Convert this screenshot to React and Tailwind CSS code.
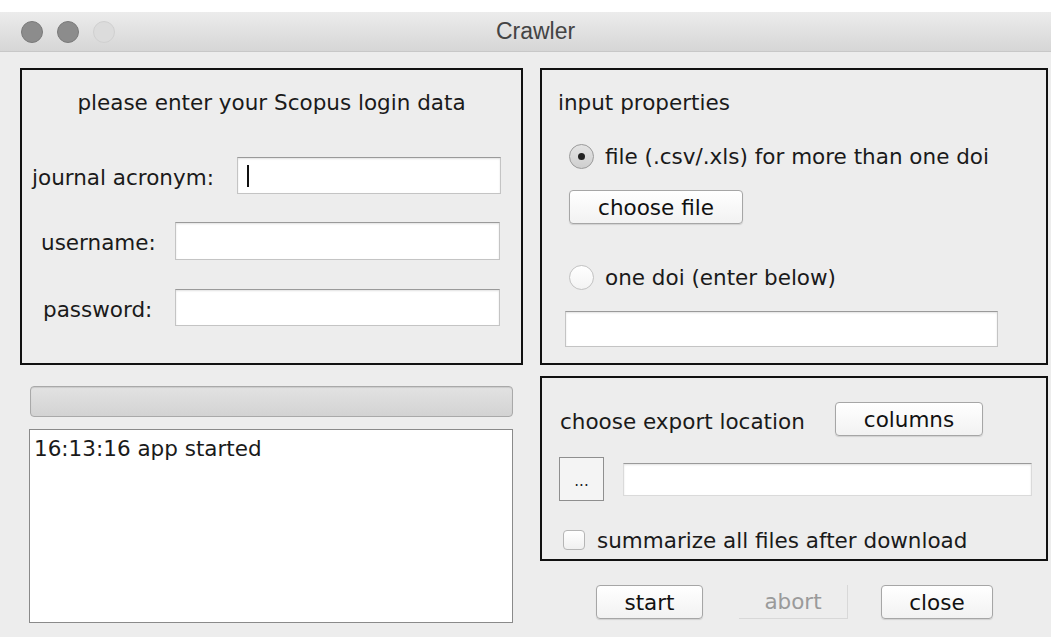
import React from 'react'

const ui = { fontFamily: '"DejaVu Sans", "Liberation Sans", sans-serif' }

function Field({ className = '', children }) {
    return (
        <div className={`bg-white border border-[#c4c4c4] border-t-[#9a9a9a] shadow-[inset_0_1px_2px_rgba(0,0,0,0.12)] flex items-center ${className}`}>
            {children}
        </div>
    )
}

function Button({ className = '', children }) {
    return (
        <div className={`flex items-center justify-center pt-[2px] rounded-[4px] border border-[#a6a6a6] bg-gradient-to-b from-white to-[#f2f2f2] shadow-[0_1px_1px_rgba(0,0,0,0.12)] text-[#111] ${className}`}>
            {children}
        </div>
    )
}

function Radio({ checked }) {
    return (
        <div className={`w-[25px] h-[25px] rounded-full border flex items-center justify-center shrink-0 ${checked ? 'border-[#9a9a9a] bg-gradient-to-b from-[#e4e4e4] to-[#cfcfcf]' : 'border-[#c2c2c2] bg-gradient-to-b from-white to-[#f3f3f3]'}`}>
            {checked && <div className="w-[7px] h-[7px] rounded-full bg-[#222]" />}
        </div>
    )
}

export default function App() {
    return (
        <div className="w-[1051px] h-[637px] bg-white overflow-hidden text-[21.5px] text-[#1a1a1a]" style={ui}>
            <div className="h-[12px] bg-white" />
            {/* title bar */}
            <div className="h-[40px] bg-gradient-to-b from-[#ececec] to-[#d6d6d6] border-b border-[#c8c8c8] flex items-center relative">
                <div className="flex gap-[14px] pl-[21px]">
                    <div className="w-[22px] h-[22px] rounded-full bg-[#8c8c8c] border border-[#7a7a7a]" />
                    <div className="w-[22px] h-[22px] rounded-full bg-[#8c8c8c] border border-[#7a7a7a]" />
                    <div className="w-[22px] h-[22px] rounded-full bg-[#dcdcdc] border border-[#d0d0d0]" />
                </div>
                <div className="absolute inset-0 flex items-center justify-center pl-[20px] text-[23px] text-[#444]" style={{ fontFamily: '"Liberation Sans", Arial, sans-serif' }}>
                    Crawler
                </div>
            </div>

            {/* window body */}
            <div className="h-[585px] bg-[#ededed] flex pt-[16px] pl-[20px] gap-[17px]">
                {/* left column */}
                <div className="w-[503px] flex flex-col">
                    <div className="h-[297px] border-2 border-[#111] flex flex-col">
                        <div className="text-center pt-[20px] h-[44px] leading-[26px]">please enter your Scopus login data</div>
                        <div className="flex items-center mt-[43px] h-[37px]">
                            <div className="pl-[10px] pt-[5px] w-[215px]">journal acronym:</div>
                            <Field className="w-[264px] h-[37px] pl-[9px]">
                                <div className="w-[2px] h-[22px] bg-[#111]" />
                            </Field>
                        </div>
                        <div className="flex items-center mt-[28px] h-[38px]">
                            <div className="pl-[19px] pt-[5px] w-[153px]">username:</div>
                            <Field className="w-[325px] h-[38px]" />
                        </div>
                        <div className="flex items-center mt-[29px] h-[37px]">
                            <div className="pl-[21px] pt-[5px] w-[153px]">password:</div>
                            <Field className="w-[325px] h-[37px]" />
                        </div>
                    </div>

                    <div className="mt-[21px] ml-[10px] w-[483px] h-[31px] rounded-[4px] border border-[#a9a9a9] bg-gradient-to-b from-[#e2e2e2] to-[#d3d3d3] shadow-[inset_0_1px_1px_rgba(0,0,0,0.1)]" />

                    <div className="mt-[12px] ml-[9px] w-[484px] h-[194px] bg-white border border-[#8a8a8a] px-[4px] pt-[5px] leading-[28px]">
                        16:13:16 app started
                    </div>
                </div>

                {/* right column */}
                <div className="w-[508px] flex flex-col">
                    <div className="h-[297px] border-2 border-[#111] flex flex-col">
                        <div className="pl-[16px] pt-[20px] leading-[26px]">input properties</div>
                        <div className="flex items-center gap-[11px] pl-[27px] mt-[27px] h-[26px]">
                            <Radio checked />
                            <span className="pt-[3px]">file (.csv/.xls) for more than one doi</span>
                        </div>
                        <Button className="ml-[27px] mt-[21px] w-[174px] h-[34px]">choose file</Button>
                        <div className="flex items-center gap-[11px] pl-[27px] mt-[40px] h-[26px]">
                            <Radio />
                            <span className="pt-[3px]">one doi (enter below)</span>
                        </div>
                        <Field className="ml-[23px] mt-[21px] w-[433px] h-[36px]" />
                    </div>

                    <div className="mt-[11px] h-[185px] border-2 border-[#111] flex flex-col">
                        <div className="flex items-center mt-[24px] h-[34px]">
                            <span className="pl-[18px] pt-[6px] w-[293px]">choose export location</span>
                            <Button className="w-[148px] h-[34px]">columns</Button>
                        </div>
                        <div className="flex items-center mt-[21px] h-[44px]">
                            <div className="ml-[17px] w-[45px] h-[44px] border border-[#8f8f8f] bg-[#f4f4f4] flex items-center justify-center text-[15px] pt-[4px]">...</div>
                            <Field className="ml-[19px] w-[409px] h-[33px] border-[#dadada]" />
                        </div>
                        <div className="flex items-center gap-[12px] mt-[22px] pl-[21px]">
                            <div className="w-[22px] h-[20px] rounded-[4px] border border-[#b5b5b5] bg-gradient-to-b from-white to-[#f0f0f0]" />
                            <span className="pt-[2px]">summarize all files after download</span>
                        </div>
                    </div>

                    <div className="flex mt-[24px] h-[34px]">
                        <Button className="ml-[56px] w-[107px] h-[34px]">start</Button>
                        <div className="ml-[36px] w-[109px] h-[34px] pt-[2px] flex items-center justify-center text-[#9a9a9a] border-b border-r border-[#d8d8d8]">abort</div>
                        <Button className="ml-[33px] w-[112px] h-[34px]">close</Button>
                    </div>
                </div>
            </div>
        </div>
    )
}
